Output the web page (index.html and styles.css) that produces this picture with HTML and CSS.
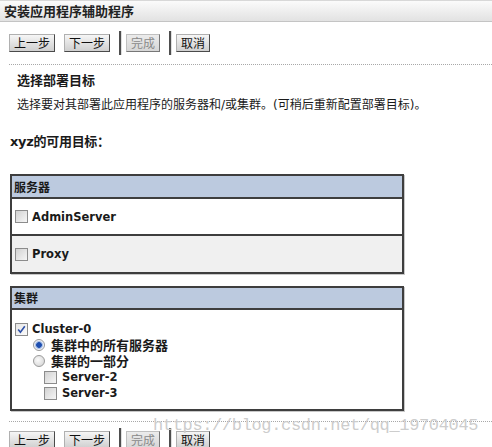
FILE: index.html
```html
<!DOCTYPE html>
<html lang="zh">
<head>
<meta charset="utf-8">
<title>安装应用程序辅助程序</title>
<link rel="stylesheet" href="styles.css">
</head>
<body>
<div class="titlebar">安装应用程序辅助程序</div>
<div class="page">
  <div class="toolbar">
    <span class="btn">上一步</span>
    <span class="btn gap">下一步</span>
    <span class="sep"></span>
    <span class="btn disabled">完成</span>
    <span class="sep"></span>
    <span class="btn">取消</span>
  </div>
  <div class="dotted"></div>
  <div class="section">
    <h2 class="h-sub">选择部署目标</h2>
    <p class="desc">选择要对其部署此应用程序的服务器和/或集群。(可稍后重新配置部署目标)。</p>
  </div>
  <h3 class="h-avail">xyz的可用目标：</h3>

  <div class="panel servers">
    <div class="panel-head">服务器</div>
    <div class="row"><span class="cb"></span><span class="lbl">AdminServer</span></div>
    <div class="row alt"><span class="cb"></span><span class="lbl">Proxy</span></div>
  </div>

  <div class="panel cluster">
    <div class="panel-head">集群</div>
    <div class="cluster-body">
      <div class="line"><span class="cb checked"><svg viewBox="0 0 11 11" width="11" height="11"><path d="M2.2 5.6 L4.4 8.2 L8.8 2.2" fill="none" stroke="#2c4fa8" stroke-width="1.6"/></svg></span><span class="lbl">Cluster-0</span></div>
      <div class="line ind1"><span class="radio on"></span><span class="lbl">集群中的所有服务器</span></div>
      <div class="line ind1"><span class="radio"></span><span class="lbl">集群的一部分</span></div>
      <div class="line ind2"><span class="cb"></span><span class="lbl">Server-2</span></div>
      <div class="line ind2"><span class="cb"></span><span class="lbl">Server-3</span></div>
    </div>
  </div>

  <div class="dotted bottom"></div>
  <div class="toolbar low">
    <span class="btn">上一步</span>
    <span class="btn gap">下一步</span>
    <span class="sep"></span>
    <span class="btn disabled">完成</span>
    <span class="sep"></span>
    <span class="btn">取消</span>
  </div>
</div>
<div class="watermark">https://blog.csdn.net/qq_19704045</div>
</body>
</html>
```
FILE: styles.css
```css
html, body {
  margin: 0;
  padding: 0;
  overflow: hidden;
  height: 100%;
}
body {
  background: #fff;
  color: #1a1a1a;
  font-family: "DejaVu Sans", "Noto Sans CJK SC", sans-serif;
  position: relative;
}
.titlebar {
  height: 22px;
  box-sizing: border-box;
  background: linear-gradient(#fbfbfb, #e2e2e2);
  border-top: 1px solid #d8d8d8;
  border-bottom: 1px solid #c4c4c4;
  font-family: "Noto Sans CJK SC", sans-serif;
  font-weight: bold;
  font-size: 13px;
  line-height: 20px;
  padding-left: 4px;
  color: #222;
}
.page {
  padding-left: 9px;
}
.toolbar {
  display: flex;
  align-items: center;
  height: 24px;
  margin-top: 9px;
}
.toolbar.low {
  margin-top: 6px;
}
.btn {
  height: 18px;
  box-sizing: border-box;
  border: 1px solid;
  border-color: #b0b0b0 #4a4a4a #4a4a4a #b0b0b0;
  background: linear-gradient(#f6f6f6, #cfcfcf);
  font-family: "Noto Sans CJK SC", sans-serif;
  font-size: 12px;
  line-height: 16px;
  padding: 0 4px;
  color: #111;
}
.btn.gap {
  margin-left: 9px;
}
.btn.disabled {
  color: #8a8a8a;
  background: linear-gradient(#ececec, #d6d6d6);
  border-color: #c0c0c0 #777 #777 #c0c0c0;
}
.sep {
  width: 2px;
  height: 24px;
  background: #4e4e4e;
  border-right: 1px solid #dedede;
  margin: 0 4px 0 9px;
}
.btn.disabled + .sep {
  margin-left: 9px;
}
.dotted {
  border-top: 1px dotted #a8a8a8;
  margin-top: 9px;
}
.dotted.bottom {
  margin-top: 10px;
}
.section {
  padding-left: 8px;
}
.h-sub {
  margin: 7px 0 0;
  font-size: 13px;
  line-height: 16px;
  font-weight: bold;
  font-family: "Noto Sans CJK SC", sans-serif;
}
.desc {
  margin: 9px 0 0;
  font-size: 12px;
  line-height: 16px;
  font-family: "DejaVu Sans", "Noto Sans CJK SC", sans-serif;
}
.h-avail {
  margin: 21px 0 0 1px;
  font-size: 13px;
  line-height: 16px;
  font-weight: bold;
  font-family: "DejaVu Sans", "Noto Sans CJK SC", sans-serif;
  letter-spacing: -0.3px;
}
.panel {
  width: 394px;
  box-sizing: border-box;
  margin-left: 1px;
  border: 2px solid #3e3e3e;
  box-shadow: 1px 1px 0 #c8c8c8;
}
.servers {
  margin-top: 24px;
}
.cluster {
  margin-top: 12px;
}
.panel-head {
  height: 21px;
  background: #bccadf;
  border-bottom: 2px solid #3e3e3e;
  font-family: "Noto Sans CJK SC", sans-serif;
  font-weight: bold;
  font-size: 12px;
  line-height: 21px;
  padding-left: 2px;
}
.cluster .panel-head {
  height: 20px;
  line-height: 20px;
}
.row {
  height: 35px;
  display: flex;
  align-items: center;
  padding-left: 3px;
  border-bottom: 2px solid #3e3e3e;
  background: #fff;
}
.row.alt {
  height: 36px;
  border-bottom: none;
  background: #f0f0f0;
}
.lbl {
  font-weight: bold;
  font-size: 11px;
  line-height: 16px;
  margin-left: 4px;
  font-family: "DejaVu Sans", "Noto Sans CJK SC", sans-serif;
}
.row .lbl {
  font-size: 11.5px;
}
.cb {
  width: 11px;
  height: 11px;
  border: 1px solid #8c8c8c;
  background: linear-gradient(135deg, #d2d2d2, #f6f6f6);
  display: inline-flex;
  flex: none;
}
.cb svg {
  display: block;
}
.cb.checked {
  background: linear-gradient(135deg, #e6e6e6, #fbfbfb);
}
.cluster-body {
  padding: 11px 0 8px 3px;
}
.line {
  height: 16px;
  display: flex;
  align-items: center;
}
.line .lbl {
  font-size: 11.5px;
}
.ind1 {
  padding-left: 18px;
}
.ind1 .lbl {
  font-size: 13px;
  line-height: 16px;
  margin-left: 6px;
  font-family: "Noto Sans CJK SC", sans-serif;
}
.ind2 {
  padding-left: 29px;
}
.ind2 .lbl {
  margin-left: 5px;
}
.radio {
  width: 10px;
  height: 10px;
  border-radius: 50%;
  border: 1px solid #9a9a9a;
  background: radial-gradient(circle at 40% 40%, #fafafa, #d0d0d0);
  flex: none;
  position: relative;
}
.radio.on {
  background: radial-gradient(circle, #1f4fb0 0 2.5px, #8aa8da 3px, #eef2fa 4.5px);
}
.watermark {
  position: absolute;
  left: 153px;
  top: 416px;
  font-family: "Liberation Mono", monospace;
  font-size: 17px;
  letter-spacing: -0.35px;
  color: #cdcdcd;
  white-space: nowrap;
  pointer-events: none;
}
```
